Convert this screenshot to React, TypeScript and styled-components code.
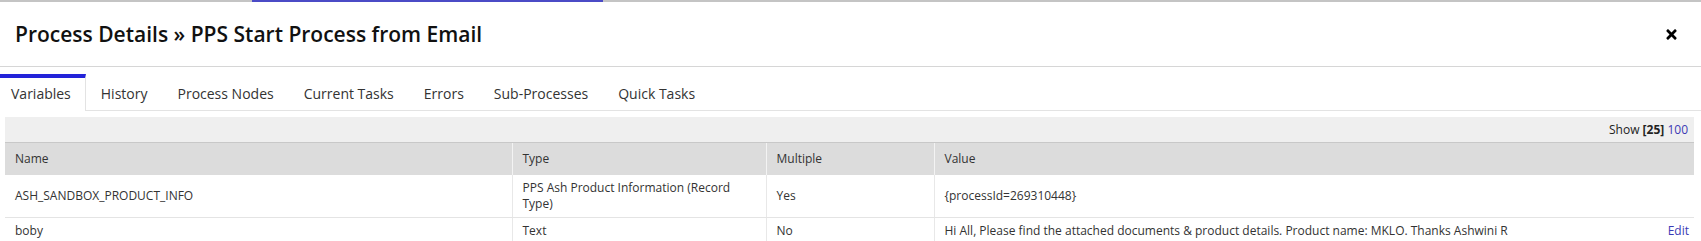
import { FC } from 'react';
import styled, { createGlobalStyle } from 'styled-components';
import { FaTimes } from 'react-icons/fa';

interface Variable {
  name: string;
  type: string;
  multiple: string;
  value: string;
  editable?: boolean;
}

const tabs = ['Variables', 'History', 'Process Nodes', 'Current Tasks', 'Errors', 'Sub-Processes', 'Quick Tasks'];

const variables: Variable[] = [
  {
    name: 'ASH_SANDBOX_PRODUCT_INFO',
    type: 'PPS Ash Product Information (Record Type)',
    multiple: 'Yes',
    value: '{processId=269310448}',
  },
  {
    name: 'boby',
    type: 'Text',
    multiple: 'No',
    value: 'Hi All, Please find the attached documents & product details. Product name: MKLO. Thanks Ashwini R',
    editable: true,
  },
];

const App: FC = () => {
  return (
    <>
      <GlobalStyle />
      <Page>
        <TopStrip>
          <TopStripIndicator />
        </TopStrip>
        <Header>
          <Title>Process Details » PPS Start Process from Email</Title>
          <CloseButton aria-label="Close">
            <FaTimes size={15} />
          </CloseButton>
        </Header>
        <TabList>
          {tabs.map((tab, i) => (
            <Tab key={tab} $active={i === 0}>
              {tab}
            </Tab>
          ))}
        </TabList>
        <Content>
          <Toolbar>
            Show <b>[25]</b> <Link>100</Link>
          </Toolbar>
          <Table>
            <colgroup>
              <col style={{ width: 507 }} />
              <col style={{ width: 254 }} />
              <col style={{ width: 168 }} />
              <col />
            </colgroup>
            <thead>
              <tr>
                <Th>Name</Th>
                <Th>Type</Th>
                <Th>Multiple</Th>
                <Th>Value</Th>
              </tr>
            </thead>
            <tbody>
              {variables.map((v) => (
                <tr key={v.name}>
                  <Td>{v.name}</Td>
                  <Td>{v.type}</Td>
                  <Td>{v.multiple}</Td>
                  <Td>
                    {v.value}
                    {v.editable && <EditLink>Edit</EditLink>}
                  </Td>
                </tr>
              ))}
            </tbody>
          </Table>
        </Content>
      </Page>
    </>
  );
};

export default App;

const GlobalStyle = createGlobalStyle`
  body {
    margin: 0;
    background: #fff;
    font-family: "Open Sans", "Noto Sans", Arial, sans-serif;
    color: #333;
  }
`;

const Page = styled.div`
  width: 1701px;
  height: 241px;
  overflow: hidden;
`;

const TopStrip = styled.div`
  display: flex;
  height: 2px;
  background: #c4c4c4;
`;

const TopStripIndicator = styled.div`
  margin-left: 252px;
  width: 351px;
  background: #4b4bc6;
`;

const Header = styled.div`
  display: flex;
  align-items: center;
  justify-content: space-between;
  height: 64px;
  padding: 0 22px 0 15px;
  border-bottom: 1px solid #d6d6d6;
`;

const Title = styled.h2`
  margin: 0;
  font-size: 21px;
  font-weight: 600;
  color: #111;
`;

const CloseButton = styled.span`
  display: flex;
  color: #000;
  cursor: pointer;
  margin-top: 1px;
`;

const TabList = styled.div`
  display: flex;
  gap: 4px;
  padding-top: 7px;
  border-bottom: 1px solid #e3e3e3;
`;

const Tab = styled.div<{ $active?: boolean }>`
  height: 32px;
  line-height: 32px;
  padding: 0 14px 0 11px;
  font-size: 14px;
  color: #333;
  border-top: 4px solid ${(p) => (p.$active ? '#2323d9' : 'transparent')};
  border-right: 1px solid ${(p) => (p.$active ? '#e3e3e3' : 'transparent')};
  background: ${(p) => (p.$active ? '#fff' : 'transparent')};
  margin-bottom: ${(p) => (p.$active ? '-1px' : '0')};
  padding-bottom: ${(p) => (p.$active ? '1px' : '0')};
  cursor: pointer;
`;

const Content = styled.div`
  padding: 6px 7px 0 5px;
`;

const Toolbar = styled.div`
  height: 25px;
  line-height: 25px;
  padding-right: 6px;
  text-align: right;
  font-size: 12px;
  background: #efefef;
  border-bottom: 1px solid #c8c8c8;
  color: #222;

  b {
    font-weight: 700;
  }
`;

const Link = styled.a`
  color: #3b3bb5;
  cursor: pointer;
`;

const Table = styled.table`
  width: 100%;
  border-collapse: collapse;
  table-layout: fixed;
  font-size: 12px;
`;

const Th = styled.th`
  background: #dcdcdc;
  text-align: left;
  font-weight: 400;
  color: #333;
  padding: 8px 10px;
  line-height: 16px;
  border-left: 1px solid #f3f3f3;

  &:first-child {
    border-left: none;
  }
`;

const Td = styled.td`
  padding: 5px 10px;
  line-height: 16px;
  color: #333;
  border-bottom: 1px solid #e4e4e4;
  border-left: 1px solid #e8e8e8;
  vertical-align: middle;

  &:first-child {
    border-left: none;
  }
`;

const EditLink = styled.a`
  float: right;
  color: #3b3bb5;
  cursor: pointer;
  margin-right: -5px;
`;
